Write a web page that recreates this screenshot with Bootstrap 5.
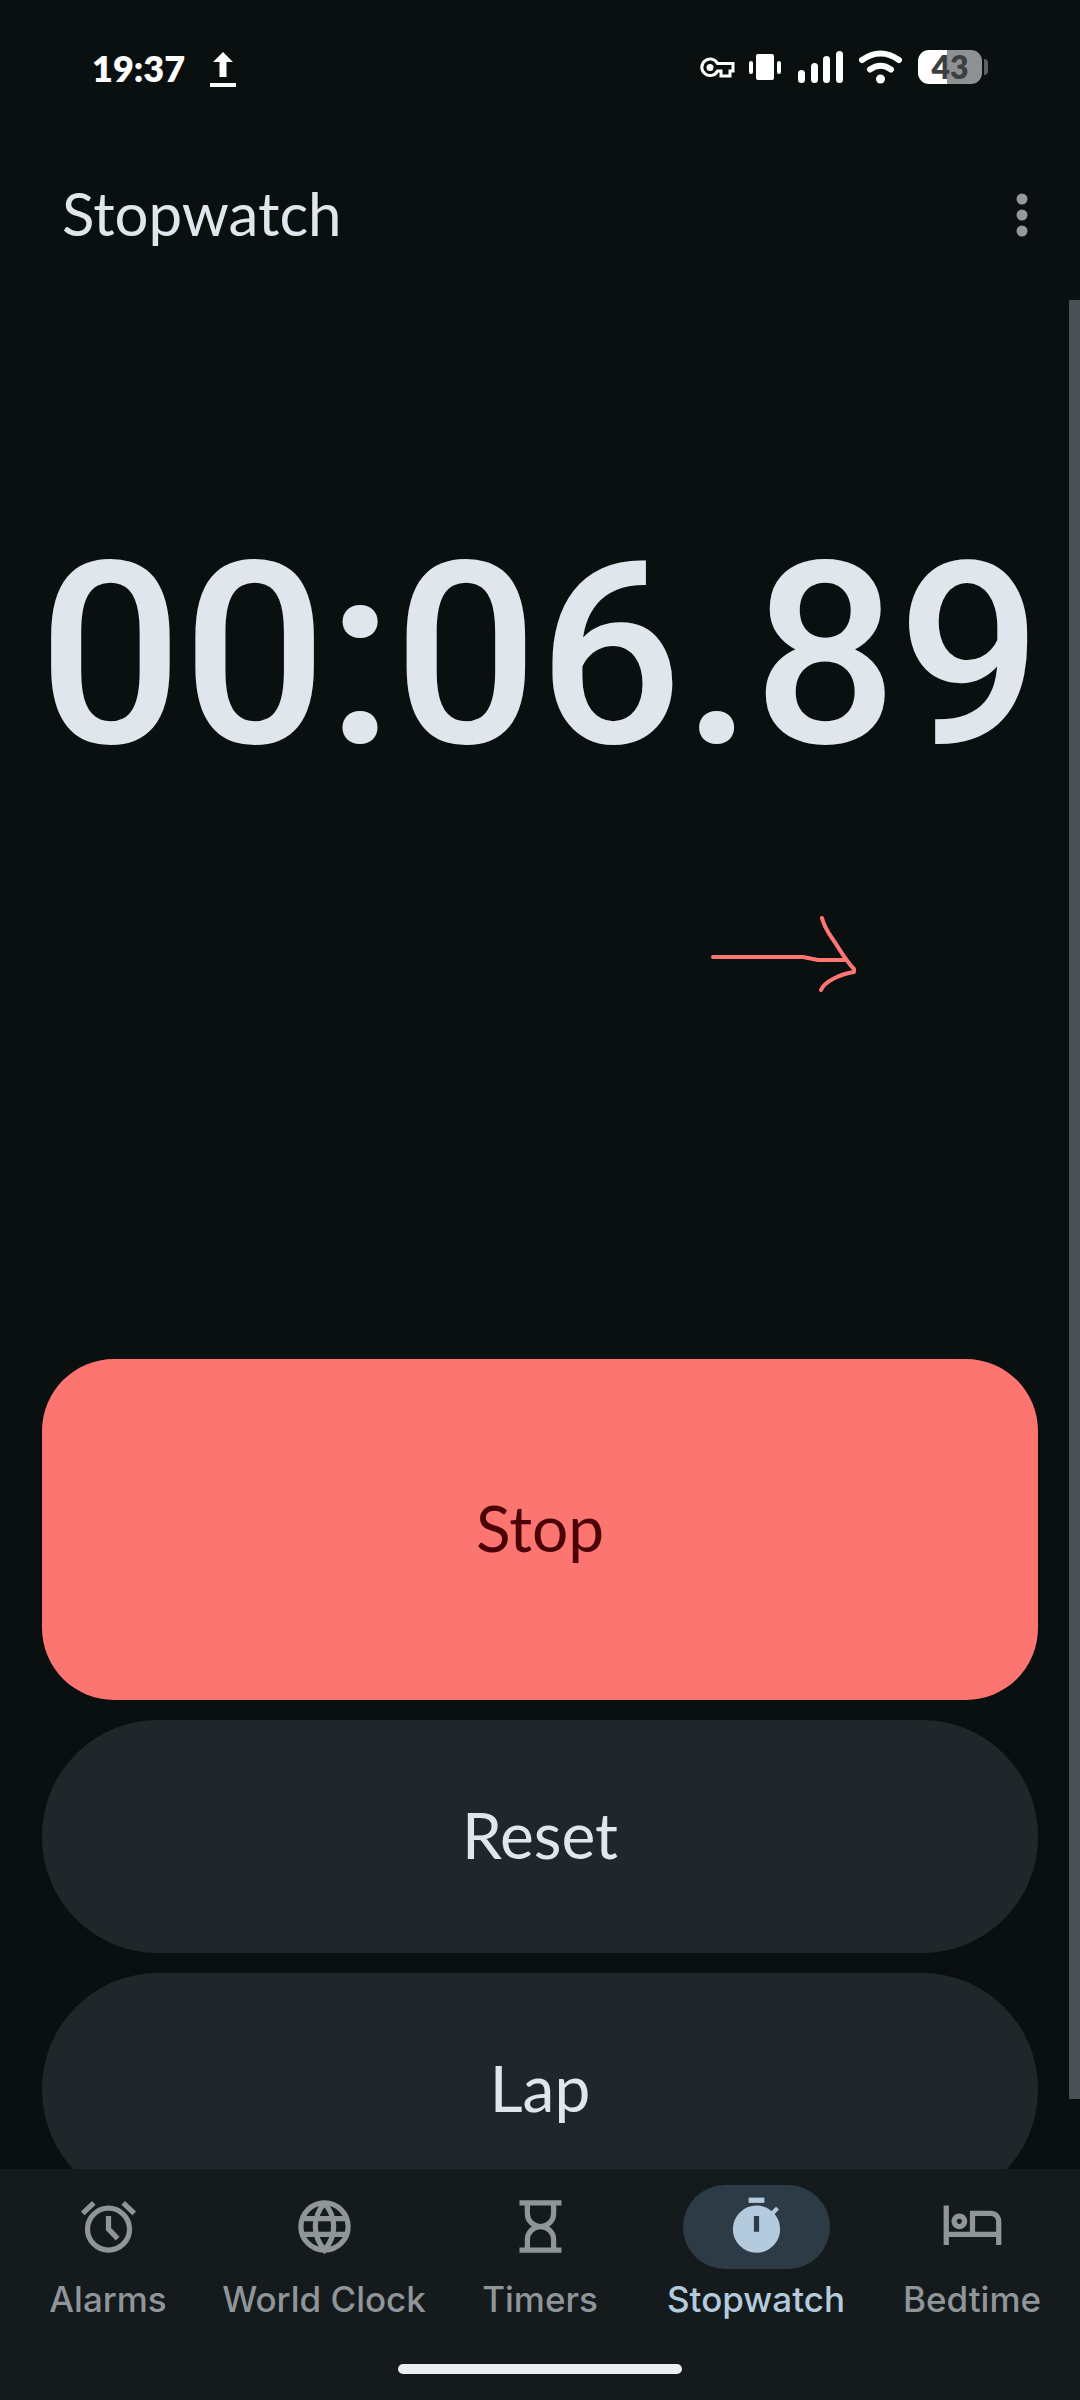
<!DOCTYPE html>
<html lang="en">
<head>
<meta charset="utf-8">
<meta name="viewport" content="width=device-width, initial-scale=1">
<title>Stopwatch</title>
<link href="https://cdn.jsdelivr.net/npm/bootstrap@5.3.0/dist/css/bootstrap.min.css" rel="stylesheet">
<style>
:root{--bg:#0a0f10;--surface:#20272a;--fg:#e0e6ec;--muted:#8f9599;--bar:#151a1d;--coral:#fc7570}
body{background:var(--bg);color:var(--fg);font-family:Lato,"Open Sans",sans-serif}
.status-bar{height:134px;padding:0 92px;color:#fff}
.status-time{font-size:36px;font-weight:800;line-height:40px;padding-bottom:4px}
.battery{width:64px;height:34px;border-radius:11px;background:linear-gradient(90deg,#fff 46%,#8f9193 46%);color:#3c3f40;font-size:32px;font-weight:800;line-height:34px;margin-left:14px}
.battery-tip{width:4px;height:16px;border-radius:0 4px 4px 0;background:#5c6062;margin-left:2px}
.app-bar{height:166px;padding:0 34px 4px 62px}
.app-title{font-size:60px;line-height:72px;font-weight:400;padding-bottom:4px}
.menu-btn{width:48px;height:64px;color:#95999b}
.scroll-thumb{top:0;right:0;bottom:70px;width:11px;background:#4a5155}
.clock-face{height:1059px}
.elapsed{font-family:Roboto,sans-serif;font-weight:500;font-size:254px;line-height:300px;margin-top:206px}
.sketch-arrow{top:612px;right:calc(20% + 6px);width:150px;height:84px}
.controls{gap:20px;padding:0 42px}
.ctl{border:0;border-radius:116px;min-height:233px;font-size:64px;line-height:72px;padding:0 0 4px;background:var(--surface);color:var(--fg)}
.ctl:hover{background:#2a3235;color:var(--fg)}
.ctl-stop,.ctl-stop:hover{border-radius:72px;min-height:341px;background:var(--coral);color:#4a0006}
.tab-bar{background:var(--bar);padding-top:16px;height:231px}
.tab{color:var(--muted);font-family:Inter,sans-serif;font-weight:500;font-size:35px;line-height:40px;gap:10px}
.tab-icon{width:147px;height:84px;border-radius:42px;padding-bottom:2px}
.tab.active{color:#b3cbdd}
.tab.active .tab-icon{background:#2d3b47}
.home-pill{width:284px;height:10px;border-radius:5px;background:#ecefef;margin-bottom:26px}
</style>
</head>
<body>
<div class="d-flex flex-column vh-100 overflow-hidden">
  <div class="status-bar d-flex align-items-start justify-content-between flex-shrink-0">
    <div class="d-flex align-items-center mt-5">
      <span class="status-time">19:37</span>
      <svg class="ms-4" width="28" height="38" viewBox="0 0 28 38" fill="currentColor" aria-hidden="true"><path d="M14 1 24 11H17.500V26H10.500V11H4zM1 32h26v4H1z"/></svg>
    </div>
    <div class="d-flex align-items-center mt-5">
      <svg width="204" height="38" viewBox="0 0 204 38" fill="currentColor" aria-hidden="true">
        <path d="M17.500 15.500A8.300 8.300 0 1 0 17.500 23H21v5h9v-5h3v-7.500z" fill="none" stroke="currentColor" stroke-width="3"/>
        <circle cx="10" cy="19.500" r="3.500"/><path d="M10 17.500h19v8h-4v-4H10z" fill="none"/>
        <rect x="56" y="6" width="18" height="26" rx="2"/><rect x="49" y="13" width="4" height="13" rx="2"/><rect x="77" y="13" width="4" height="13" rx="2"/>
        <rect x="98" y="22" width="7" height="13" rx="3.500"/><rect x="111" y="15" width="7" height="20" rx="3.500"/><rect x="123" y="8" width="7" height="27" rx="3.500"/><rect x="136" y="3" width="7" height="32" rx="3.500"/>
        <g fill="none" stroke="currentColor" stroke-width="6" stroke-linecap="round"><path d="M162 12Q180.500-1 199 12"/><path d="M170 21.500Q180.500 14 191 21.500"/></g><circle cx="180.500" cy="31" r="4.500"/>
      </svg>
      <span class="battery text-center">43</span><span class="battery-tip"></span>
    </div>
  </div>

  <header class="app-bar d-flex align-items-center justify-content-between flex-shrink-0">
    <h1 class="app-title mb-0">Stopwatch</h1>
    <button type="button" class="btn menu-btn p-0 border-0" aria-label="More options">
      <svg width="12" height="44" viewBox="0 0 12 44" fill="currentColor"><circle cx="6" cy="6" r="5.500"/><circle cx="6" cy="22" r="5.500"/><circle cx="6" cy="38" r="5.500"/></svg>
    </button>
  </header>

  <main class="position-relative flex-grow-1 overflow-hidden">
    <section class="clock-face overflow-hidden text-center">
      <div class="elapsed" role="timer">00:06.89</div>
      <svg class="sketch-arrow position-absolute" viewBox="0 0 150 84" fill="none" stroke="#fd7672" stroke-width="4" stroke-linecap="round" stroke-linejoin="round" aria-hidden="true"><path d="M5 45H95L110 48H137M114 6C117 18 123 24 128 32S139 50 146 57V60C132 62 116 70 113 78"/></svg>
    </section>
    <div class="controls d-flex flex-column">
      <button type="button" class="btn ctl ctl-stop">Stop</button>
      <button type="button" class="btn ctl">Reset</button>
      <button type="button" class="btn ctl">Lap</button>
    </div>
    <div class="scroll-thumb position-absolute"></div>
  </main>

  <footer class="tab-bar d-flex flex-column flex-shrink-0 justify-content-between align-items-center">
    <nav class="d-flex w-100">
      <a href="#" class="tab col d-flex flex-column align-items-center text-decoration-none text-nowrap">
        <span class="tab-icon d-flex align-items-center justify-content-center"><svg width="63" height="63" viewBox="0 0 24 24" fill="none" stroke="currentColor" stroke-width="2"><circle cx="12" cy="13" r="8"/><path d="M12 8v5l3.500 3.600M2.200 7 6.400 3M21.800 7 17.600 3"/></svg></span>Alarms</a>
      <a href="#" class="tab col d-flex flex-column align-items-center text-decoration-none text-nowrap">
        <span class="tab-icon d-flex align-items-center justify-content-center"><svg width="63" height="63" viewBox="0 0 24 24" fill="none" stroke="currentColor" stroke-width="2"><circle cx="12" cy="12" r="9"/><path d="M3.500 9h17M3.500 15h17M12 3C9.500 6 8.500 9 8.500 12s1 6 3.500 9c2.500-3 3.500-6 3.500-9S14.500 6 12 3"/></svg></span>World Clock</a>
      <a href="#" class="tab col d-flex flex-column align-items-center text-decoration-none text-nowrap">
        <span class="tab-icon d-flex align-items-center justify-content-center"><svg width="63" height="63" viewBox="0 0 24 24" fill="none" stroke="currentColor" stroke-width="2"><path d="M4 3h16M4 21h16M7 3v4a5 5 0 0 0 10 0V3M7 21v-4a5 5 0 0 1 10 0v4"/></svg></span>Timers</a>
      <a href="#" class="tab active col d-flex flex-column align-items-center text-decoration-none text-nowrap" aria-current="page">
        <span class="tab-icon d-flex align-items-center justify-content-center"><svg width="63" height="63" viewBox="0 0 24 24" fill="currentColor"><path d="M9 1h6v2H9z"/><path fill-rule="evenodd" d="M12 4a9 9 0 1 0 0 18 9 9 0 0 0 0-18zM11 8h2v6h-2z"/><path d="M17.500 7.500 20 5" stroke="currentColor" stroke-width="1.600"/></svg></span>Stopwatch</a>
      <a href="#" class="tab col d-flex flex-column align-items-center text-decoration-none text-nowrap">
        <span class="tab-icon d-flex align-items-center justify-content-center"><svg width="63" height="63" viewBox="0 1 24 24" fill="currentColor"><path d="M7 14c1.660 0 3-1.340 3-3S8.660 8 7 8s-3 1.340-3 3 1.340 3 3 3zm0-4c.55 0 1 .45 1 1s-.45 1-1 1-1-.45-1-1 .45-1 1-1zm12-3h-8v8H3V5H1v15h2v-3h18v3h2v-9c0-2.210-1.790-4-4-4zm2 8h-8V9h6c1.100 0 2 .9 2 2v4z"/></svg></span>Bedtime</a>
    </nav>
    <div class="home-pill"></div>
  </footer>
</div>
<script src="https://cdn.jsdelivr.net/npm/bootstrap@5.3.0/dist/js/bootstrap.bundle.min.js"></script>
</body>
</html>
